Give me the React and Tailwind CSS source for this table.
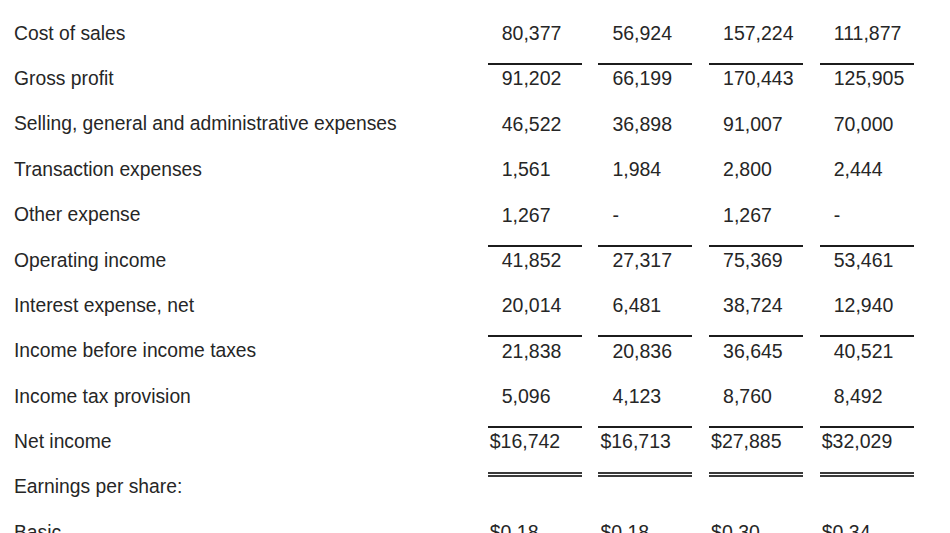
import React from 'react';

const rows = [
  { label: 'Cost of sales', values: ['80,377', '56,924', '157,224', '111,877'] },
  { label: 'Gross profit', values: ['91,202', '66,199', '170,443', '125,905'], line: 'single' },
  { label: 'Selling, general and administrative expenses', values: ['46,522', '36,898', '91,007', '70,000'] },
  { label: 'Transaction expenses', values: ['1,561', '1,984', '2,800', '2,444'] },
  { label: 'Other expense', values: ['1,267', '-', '1,267', '-'] },
  { label: 'Operating income', values: ['41,852', '27,317', '75,369', '53,461'], line: 'single' },
  { label: 'Interest expense, net', values: ['20,014', '6,481', '38,724', '12,940'] },
  { label: 'Income before income taxes', values: ['21,838', '20,836', '36,645', '40,521'], line: 'single' },
  { label: 'Income tax provision', values: ['5,096', '4,123', '8,760', '8,492'] },
  { label: 'Net income', values: ['$16,742', '$16,713', '$27,885', '$32,029'], line: 'single', dollar: true },
  { label: 'Earnings per share:', values: ['', '', '', ''], line: 'double' },
  { label: 'Basic', values: ['$0.18', '$0.18', '$0.30', '$0.34'], dollar: true },
];

const Cell = ({ value, line, dollar }) => {
  const border =
    line === 'single'
      ? 'border-t-2 border-[#1c1c1c]'
      : line === 'double'
      ? 'border-t-[5px] border-double border-[#3a3a3a]'
      : 'border-t-2 border-transparent';
  return (
    <div className={`h-[30px] flex items-center ${border} ${dollar ? 'pl-[2px]' : 'pl-[14px]'}`}>
      <span className="text-[19.5px] leading-none">{value}</span>
    </div>
  );
};

export default function App() {
  return (
    <div
      className="w-[950px] h-[533px] overflow-hidden bg-white text-[#262626] pt-[10px] pl-[14px]"
      style={{ fontFamily: '"Liberation Sans", Arial, sans-serif' }}
    >
      {rows.map((row) => (
        <div
          key={row.label}
          className="h-[45.4px] grid grid-cols-[457px_94px_94px_94px_94px] gap-x-[16.7px] items-center"
        >
          <div className="text-[19.3px] leading-none pt-[1px]">{row.label}</div>
          {row.values.map((v, i) => (
            <Cell key={i} value={v} line={row.line} dollar={row.dollar} />
          ))}
        </div>
      ))}
    </div>
  );
}
